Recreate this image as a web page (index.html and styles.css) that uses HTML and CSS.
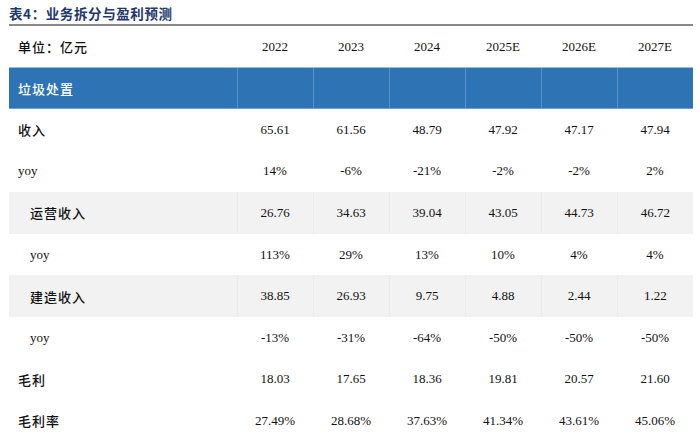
FILE: index.html
```html
<!DOCTYPE html>
<html lang="zh">
<head>
<meta charset="utf-8">
<link rel="stylesheet" href="styles.css">
</head>
<body>
<div class="wrap">
  <div class="title">表4：业务拆分与盈利预测</div>
  <table class="tbl">
    <colgroup>
      <col class="c-label">
      <col class="c-num"><col class="c-num"><col class="c-num">
      <col class="c-num"><col class="c-num"><col class="c-num">
    </colgroup>
    <tr class="head">
      <td class="lbl">单位：亿元</td>
      <td>2022</td><td>2023</td><td>2024</td><td>2025E</td><td>2026E</td><td>2027E</td>
    </tr>
    <tr class="sect">
      <td class="lbl">垃圾处置</td>
      <td></td><td></td><td></td><td></td><td></td><td></td>
    </tr>
    <tr>
      <td class="lbl">收入</td>
      <td>65.61</td><td>61.56</td><td>48.79</td><td>47.92</td><td>47.17</td><td>47.94</td>
    </tr>
    <tr>
      <td class="lbl en">yoy</td>
      <td>14%</td><td>-6%</td><td>-21%</td><td>-2%</td><td>-2%</td><td>2%</td>
    </tr>
    <tr class="shade">
      <td class="lbl ind">运营收入</td>
      <td>26.76</td><td>34.63</td><td>39.04</td><td>43.05</td><td>44.73</td><td>46.72</td>
    </tr>
    <tr>
      <td class="lbl en ind">yoy</td>
      <td>113%</td><td>29%</td><td>13%</td><td>10%</td><td>4%</td><td>4%</td>
    </tr>
    <tr class="shade">
      <td class="lbl ind">建造收入</td>
      <td>38.85</td><td>26.93</td><td>9.75</td><td>4.88</td><td>2.44</td><td>1.22</td>
    </tr>
    <tr>
      <td class="lbl en ind">yoy</td>
      <td>-13%</td><td>-31%</td><td>-64%</td><td>-50%</td><td>-50%</td><td>-50%</td>
    </tr>
    <tr>
      <td class="lbl">毛利</td>
      <td>18.03</td><td>17.65</td><td>18.36</td><td>19.81</td><td>20.57</td><td>21.60</td>
    </tr>
    <tr>
      <td class="lbl">毛利率</td>
      <td>27.49%</td><td>28.68%</td><td>37.63%</td><td>41.34%</td><td>43.61%</td><td>45.06%</td>
    </tr>
  </table>
</div>
</body>
</html>
```

FILE: styles.css
```css
html, body {
  margin: 0;
  padding: 0;
  background: #ffffff;
}
.wrap {
  padding-left: 9px;
  width: 684px;
}
.title {
  height: 24px;
  line-height: 26px;
  font-family: "Noto Sans CJK SC", sans-serif;
  font-weight: 700;
  font-size: 13.5px;
  color: #22386a;
  border-bottom: 2px solid #8a8a8a;
  box-sizing: content-box;
  letter-spacing: 0.6px;
}
.tbl {
  border-collapse: collapse;
  table-layout: fixed;
  width: 684px;
  font-family: "Liberation Serif", "Noto Sans CJK SC", serif;
  font-size: 13px;
  color: #111111;
}
.c-label { width: 228px; }
.c-num { width: 76px; }
.tbl td {
  padding: 0;
  text-align: center;
  height: 41.6px;
  vertical-align: middle;
}
.tbl td.lbl {
  text-align: left;
  padding-left: 9px;
  font-family: "Noto Sans CJK SC", serif;
  font-weight: 500;
  letter-spacing: 1px;
}
.tbl td.en {
  font-family: "Liberation Serif", serif;
  font-weight: 400;
  letter-spacing: 0;
}
.tbl td.ind {
  padding-left: 21px;
}
.head td {
  height: 41px;
}
.sect td {
  height: 40px;
  background: #2e74b5;
  color: #ffffff;
  border-top: 1px solid #9dbde0;
  border-bottom: 1px solid #6f9fd3;
  border-left: 1px solid #5a8fc8;
}
.sect td:first-child {
  border-left: none;
}
.shade td {
  background: #f2f2f2;
  border-left: 1px solid #ececec;
}
.shade td:first-child {
  border-left: none;
}
```
